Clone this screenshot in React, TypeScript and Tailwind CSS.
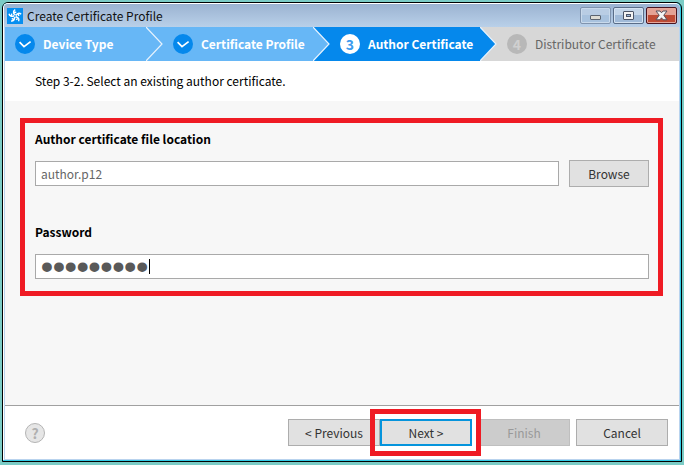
import { useState } from 'react'
import type { ReactNode } from 'react'

const CheckBadge = () => (
  <svg width="20" height="20" viewBox="0 0 20 20" aria-hidden="true">
    <circle cx="10" cy="10" r="10" fill="#0588ec" />
    <path d="M4.6 8.2 9 12.6 15.6 7.6" fill="none" stroke="#fff" strokeWidth="1.7" />
  </svg>
)

const Chevron = ({ from, to }: { from: string; to: string }) => (
  <svg className="ml-auto shrink-0" width="17" height="34" viewBox="0 0 17 34" aria-hidden="true">
    <rect width="17" height="34" fill={to} />
    <path d="M-1 0H0L16 17L0 34H-1Z" fill={from} />
    <path d="M0 0L16 17L0 34" fill="none" stroke="#e6f2fd" strokeWidth="1.2" />
  </svg>
)

const TizenIcon = () => (
  <svg width="16" height="16" viewBox="0 0 16 16" aria-hidden="true">
    <rect width="16" height="16" fill="#078ff0" />
    <g transform="rotate(-12 8 8)" fill="none" stroke="#fff">
      {[0, 72, 144, 216, 288].map((angle) => (
        <path
          key={angle}
          d="M8 6.6C6.6 4.8 7.2 2.6 9.6 1.8M7.2 4.2L10 4.6"
          strokeWidth="1.4"
          transform={`rotate(${angle} 8 8)`}
        />
      ))}
      <circle cx="8" cy="8" r="1.4" strokeWidth=".9" />
    </g>
  </svg>
)

const TitleBar = () => (
  <header className="flex h-[23px] items-center gap-1 bg-linear-to-b from-[#9bb3d1] to-[#b9d0e9] pr-[3px] pl-[3px]">
    <TizenIcon />
    <h1 className="text-xs text-[#111]">Create Certificate Profile</h1>
    <div className="ml-auto flex gap-[2px]">
      <button
        type="button"
        aria-label="Minimize"
        className="flex h-[17px] w-[31px] items-center justify-center rounded-[2px] border border-[#8094ae] bg-linear-to-b from-[#b9cde4] from-50% to-[#a8c2de] to-50% shadow-[inset_0_0_0_1px_#c9daec]"
      >
        <svg width="11" height="11" viewBox="0 0 11 11">
          <rect x=".5" y="5.5" width="10" height="4" rx=".5" fill="#dedcd4" stroke="#5c6470" />
        </svg>
      </button>
      <button
        type="button"
        aria-label="Maximize"
        className="flex h-[17px] w-[31px] items-center justify-center rounded-[2px] border border-[#5a6d88] bg-linear-to-b from-[#c3d5e9] from-50% to-[#a0bad8] to-50% shadow-[inset_0_0_0_1px_#d5e3f2]"
      >
        <svg width="11" height="9" viewBox="0 0 11 9">
          <rect x=".5" y=".5" width="10" height="8" rx=".5" fill="#f3f3f3" stroke="#4c5568" />
          <rect x="3.5" y="3.5" width="4" height="2" fill="#9fb9dc" stroke="#4c5568" />
        </svg>
      </button>
      <button
        type="button"
        aria-label="Close"
        className="flex h-[17px] w-[31px] items-center justify-center rounded-[2px] border border-[#4a1420] bg-linear-to-b from-[#e4a295] from-50% to-[#be4a34] to-50% shadow-[inset_0_0_0_1px_#e5a79b]"
      >
        <svg width="13" height="11" viewBox="0 0 13 11">
          <path d="M1 1H5L6.5 2.8L8 1H12L8.8 5.2L12 9.8H8L6.5 7.8L5 9.8H1L4.2 5.2Z" fill="#f5f5f5" stroke="#56505c" />
        </svg>
      </button>
    </div>
  </header>
)

const Steps = () => (
  <ol className="flex h-[34px] text-xs font-semibold text-white">
    <li className="flex w-[158px] items-center bg-[#67b7f6] pl-[10px]">
      <CheckBadge />
      <span className="ml-2 whitespace-nowrap">Device Type</span>
      <Chevron from="#67b7f6" to="#67b7f6" />
    </li>
    <li className="flex w-[167px] items-center bg-[#67b7f6] pl-[10px]">
      <CheckBadge />
      <span className="ml-2 whitespace-nowrap">Certificate Profile</span>
      <Chevron from="#67b7f6" to="#0588ec" />
    </li>
    <li aria-current="step" className="flex w-[167px] items-center bg-[#0588ec] pl-[10px]">
      <span className="flex size-5 items-center justify-center rounded-full bg-white text-sm font-bold text-[#3d9cee]">
        3
      </span>
      <span className="ml-2 whitespace-nowrap">Author Certificate</span>
      <Chevron from="#0588ec" to="#d7d7d7" />
    </li>
    <li className="flex flex-1 items-center bg-[#d7d7d7] pl-[10px]">
      <span className="flex size-5 items-center justify-center rounded-full bg-[#b8b8b8] text-sm font-bold text-[#d0d0d0]">
        4
      </span>
      <span className="ml-2 font-normal whitespace-nowrap text-[#666]">Distributor Certificate</span>
    </li>
  </ol>
)

const FooterButton = ({ children, disabled }: { children: ReactNode; disabled?: boolean }) => (
  <button
    type="button"
    disabled={disabled}
    className="h-[27px] w-[92px] border border-[#adadad] bg-[#e1e1e1] text-xs text-[#333] disabled:border-[#bfbfbf] disabled:bg-[#ccc] disabled:text-[#999]"
  >
    {children}
  </button>
)

export default function App() {
  const [file, setFile] = useState('author.p12')
  const [password, setPassword] = useState('tizen1234')

  return (
    <div className="flex min-h-screen flex-col bg-[#7bccc6] px-[2px] pt-[2px] pb-[3px] font-['Noto_Sans_CJK_KR','Noto_Sans',sans-serif]">
      <main className="flex flex-1 flex-col rounded-t-md border border-black bg-[#32cbe6]">
        <div className="mr-px mb-px flex flex-1 flex-col overflow-hidden rounded-t-[5px] border-t border-l border-white bg-[#b9d3ee]">
          <TitleBar />
          <div className="mr-px mb-px ml-px flex flex-1 flex-col bg-white">
            <Steps />
            <p className="flex h-10 items-center pl-[30px] text-xs text-black">
              Step 3-2. Select an existing author certificate.
            </p>

            <form className="flex-1 bg-[#f7f7f7] pt-[17px] pr-4 pl-[15px]">
              <div className="border-5 border-[#ef1b24] pt-2 pr-[9px] pb-3 pl-[10px]">
                <label htmlFor="file" className="block text-xs leading-4 font-semibold text-black">
                  Author certificate file location
                </label>
                <div className="mt-[13px] flex items-center gap-[10px]">
                  <input
                    id="file"
                    type="text"
                    value={file}
                    onChange={(e) => setFile(e.target.value)}
                    className="h-[25px] min-w-0 flex-1 border border-[#a9a9a9] bg-white px-[5px] text-xs text-[#666] outline-none"
                  />
                  <button
                    type="button"
                    className="h-[27px] w-20 border border-[#adadad] bg-[#e1e1e1] text-xs text-[#333]"
                  >
                    Browse
                  </button>
                </div>

                <label htmlFor="password" className="mt-[37px] block text-xs leading-4 font-semibold text-black">
                  Password
                </label>
                <div className="relative mt-[14px]">
                  <input
                    id="password"
                    type="password"
                    value={password}
                    onChange={(e) => setPassword(e.target.value)}
                    className="block h-[25px] w-full border border-[#a9a9a9] bg-white px-[5px] font-['Liberation_Sans',sans-serif] text-[34px] font-bold text-[#595959] outline-none"
                  />
                  {/* text caret */}
                  <span className="absolute top-[5px] left-[114px] h-[15px] w-px bg-black" />
                </div>
              </div>
            </form>

            <footer className="flex h-[54px] items-center border-t border-[#a0a0a0] pr-[11px] pl-5">
              <button
                type="button"
                aria-label="Help"
                className="flex size-5 items-center justify-center rounded-full border border-[#b4b4b4] bg-[#e6e6e6] text-sm font-bold text-[#b0b0b0]"
              >
                ?
              </button>
              <div className="ml-auto flex gap-[6px]">
                <div className="flex">
                  <FooterButton>&lt; Previous</FooterButton>
                  <div className="relative">
                    <button
                      type="button"
                      className="block h-[27px] w-[92px] border-2 border-[#0594dc] bg-[#e1e1e1] text-xs text-[#333]"
                    >
                      Next &gt;
                    </button>
                    <span className="pointer-events-none absolute -inset-y-[10px] -right-[9px] -left-[10px] border-5 border-[#ef1b24]" />
                  </div>
                </div>
                <FooterButton disabled>Finish</FooterButton>
                <FooterButton>Cancel</FooterButton>
              </div>
            </footer>
          </div>
        </div>
      </main>
    </div>
  )
}
